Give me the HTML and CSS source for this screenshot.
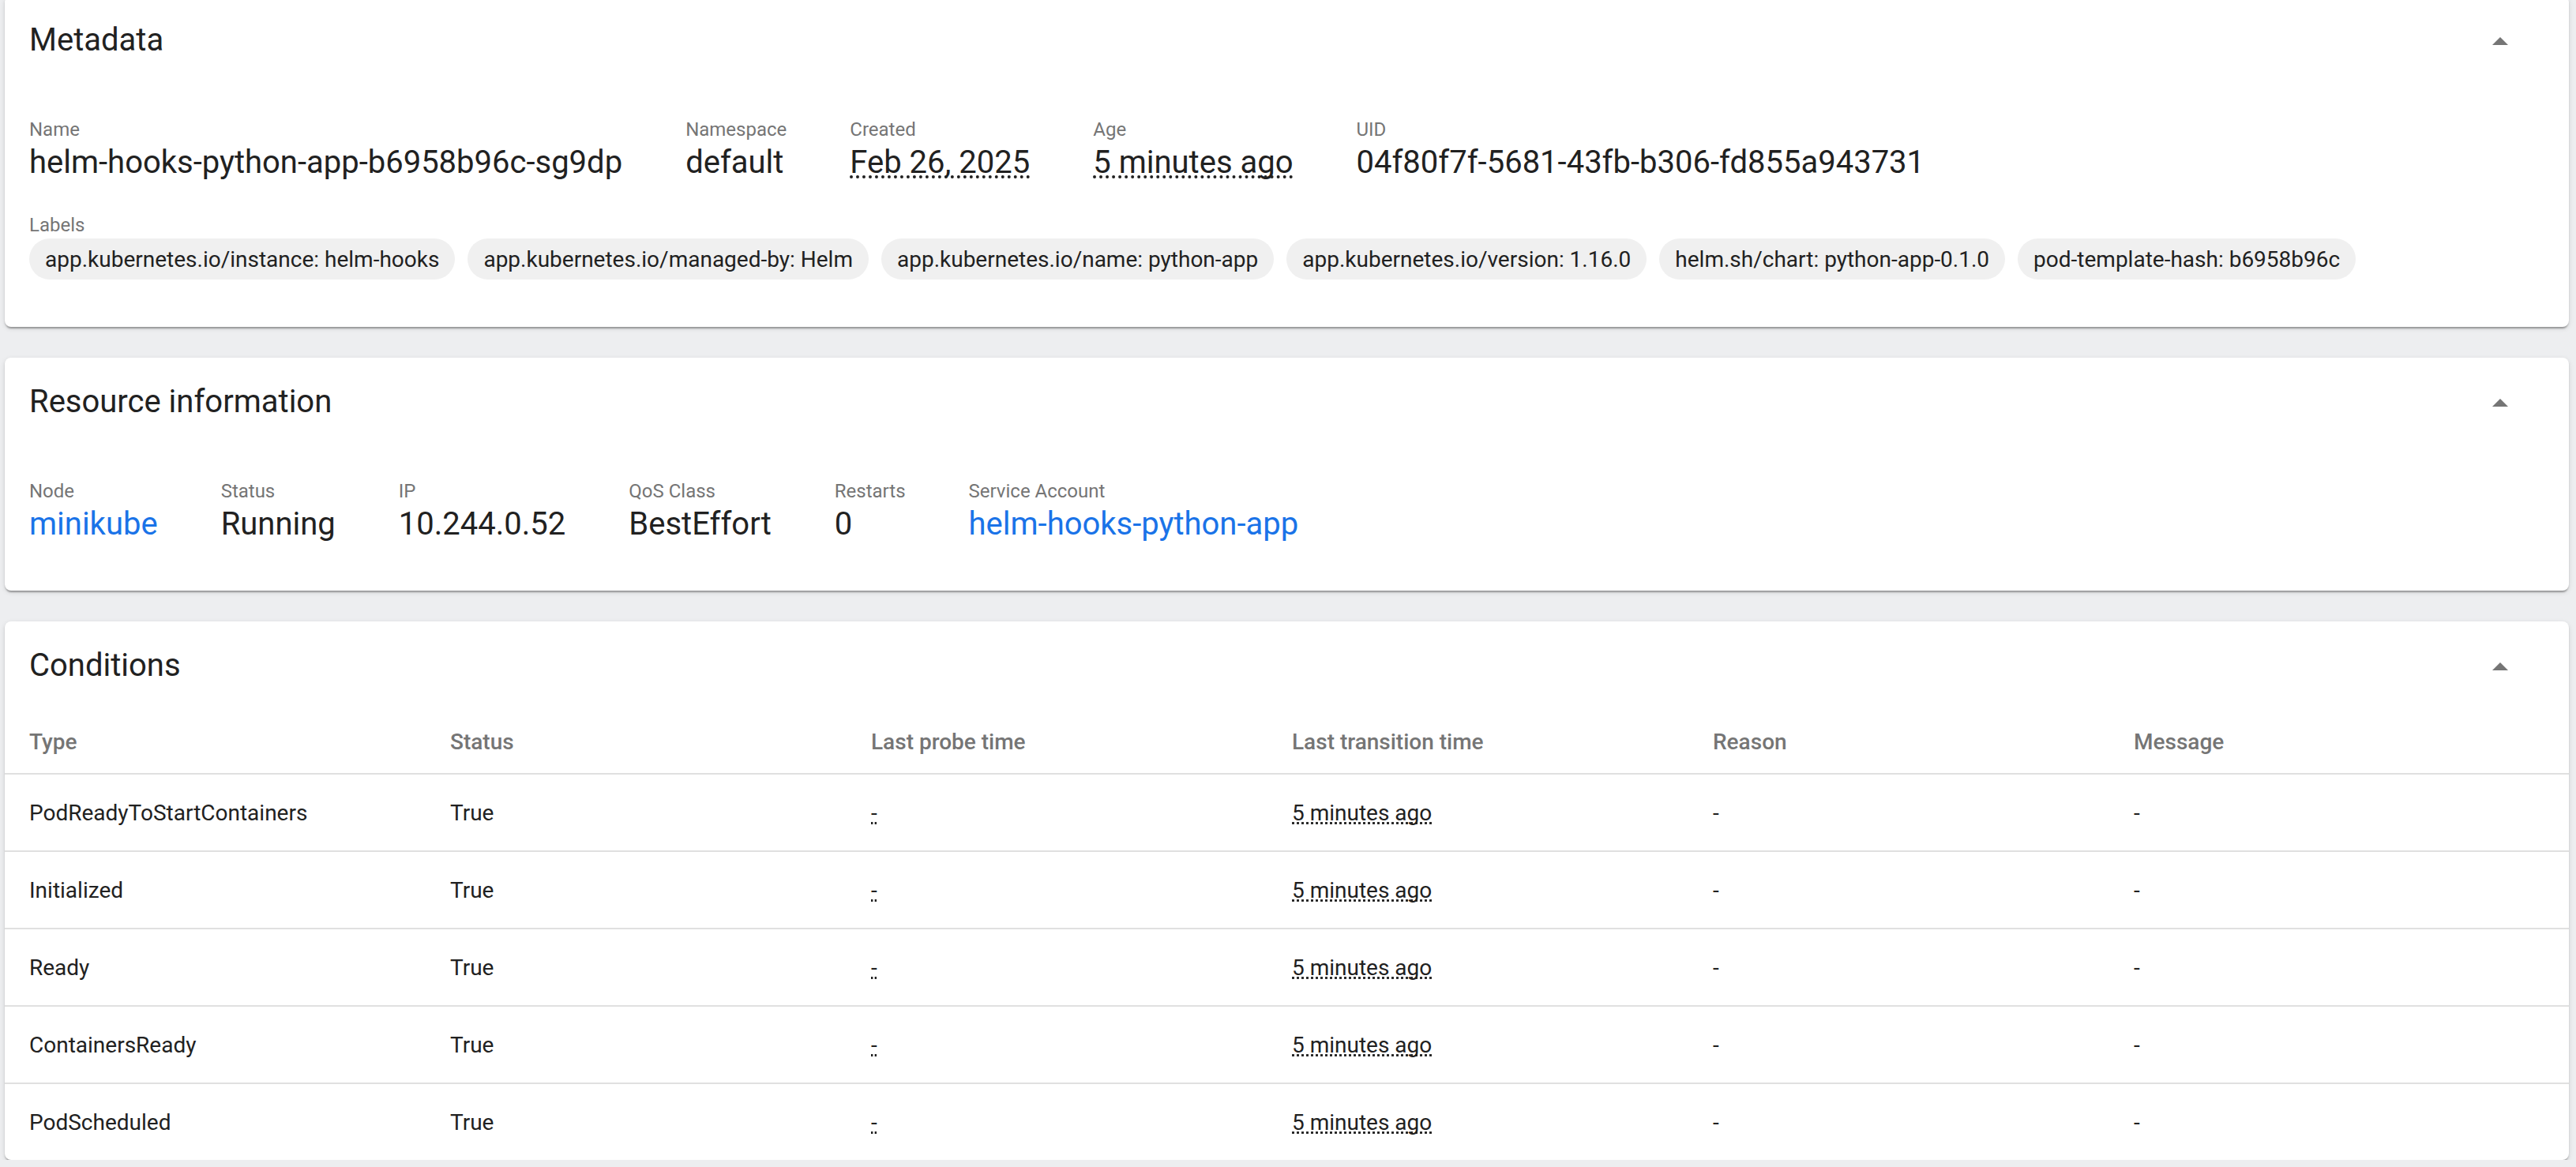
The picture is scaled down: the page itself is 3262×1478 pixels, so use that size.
FILE: index.html
```html
<!DOCTYPE html>
<html lang="en">
<head>
<meta charset="utf-8">
<title>Pod details</title>
<link rel="stylesheet" href="styles.css">
</head>
<body>
<main class="page">
  <section class="card">
    <header class="card-header">
      <h2 class="card-title">Metadata</h2>
      <svg class="toggle" viewBox="0 0 20 10" width="20" height="10"><path d="M0 10 L10 0 L20 10 Z"/></svg>
    </header>
    <div class="card-body meta-body">
      <div class="props">
        <div class="prop"><div class="prop-label">Name</div><div class="prop-value">helm-hooks-python-app-b6958b96c-sg9dp</div></div>
        <div class="prop"><div class="prop-label">Namespace</div><div class="prop-value">default</div></div>
        <div class="prop"><div class="prop-label">Created</div><div class="prop-value"><span class="dotted">Feb 26, 2025</span></div></div>
        <div class="prop"><div class="prop-label">Age</div><div class="prop-value"><span class="dotted">5 minutes ago</span></div></div>
        <div class="prop"><div class="prop-label">UID</div><div class="prop-value">04f80f7f-5681-43fb-b306-fd855a943731</div></div>
      </div>
      <div class="labels-block">
        <div class="prop-label">Labels</div>
        <div class="chips">
          <span class="chip">app.kubernetes.io/instance: helm-hooks</span>
          <span class="chip">app.kubernetes.io/managed-by: Helm</span>
          <span class="chip">app.kubernetes.io/name: python-app</span>
          <span class="chip">app.kubernetes.io/version: 1.16.0</span>
          <span class="chip">helm.sh/chart: python-app-0.1.0</span>
          <span class="chip">pod-template-hash: b6958b96c</span>
        </div>
      </div>
    </div>
  </section>

  <section class="card">
    <header class="card-header">
      <h2 class="card-title">Resource information</h2>
      <svg class="toggle" viewBox="0 0 20 10" width="20" height="10"><path d="M0 10 L10 0 L20 10 Z"/></svg>
    </header>
    <div class="card-body res-body">
      <div class="props">
        <div class="prop"><div class="prop-label">Node</div><div class="prop-value"><a class="link" href="#">minikube</a></div></div>
        <div class="prop"><div class="prop-label">Status</div><div class="prop-value">Running</div></div>
        <div class="prop"><div class="prop-label">IP</div><div class="prop-value">10.244.0.52</div></div>
        <div class="prop"><div class="prop-label">QoS Class</div><div class="prop-value">BestEffort</div></div>
        <div class="prop"><div class="prop-label">Restarts</div><div class="prop-value">0</div></div>
        <div class="prop"><div class="prop-label">Service Account</div><div class="prop-value"><a class="link" href="#">helm-hooks-python-app</a></div></div>
      </div>
    </div>
  </section>

  <section class="card">
    <header class="card-header">
      <h2 class="card-title">Conditions</h2>
      <svg class="toggle" viewBox="0 0 20 10" width="20" height="10"><path d="M0 10 L10 0 L20 10 Z"/></svg>
    </header>
    <div class="table">
      <div class="row head">
        <div>Type</div><div>Status</div><div>Last probe time</div><div>Last transition time</div><div>Reason</div><div>Message</div>
      </div>
      <div class="row">
        <div>PodReadyToStartContainers</div><div>True</div><div><span class="dotted">-</span></div><div><span class="dotted">5 minutes ago</span></div><div>-</div><div>-</div>
      </div>
      <div class="row">
        <div>Initialized</div><div>True</div><div><span class="dotted">-</span></div><div><span class="dotted">5 minutes ago</span></div><div>-</div><div>-</div>
      </div>
      <div class="row">
        <div>Ready</div><div>True</div><div><span class="dotted">-</span></div><div><span class="dotted">5 minutes ago</span></div><div>-</div><div>-</div>
      </div>
      <div class="row">
        <div>ContainersReady</div><div>True</div><div><span class="dotted">-</span></div><div><span class="dotted">5 minutes ago</span></div><div>-</div><div>-</div>
      </div>
      <div class="row">
        <div>PodScheduled</div><div>True</div><div><span class="dotted">-</span></div><div><span class="dotted">5 minutes ago</span></div><div>-</div><div>-</div>
      </div>
    </div>
  </section>
</main>
</body>
</html>
```

FILE: styles.css
```css
* { box-sizing: border-box; }

html, body {
  margin: 0;
  padding: 0;
  background: #edeef0;
  font-family: Roboto, "Liberation Sans", Arial, sans-serif;
  color: #212121;
}

.page {
  margin-top: -5px;
  padding: 0 9px 0 6px;
  display: flex;
  flex-direction: column;
  gap: 39px;
}

.card {
  background: #fff;
  border-radius: 8px;
  box-shadow: 0 4px 2px -2px rgba(0,0,0,.2), 0 2px 2px 0 rgba(0,0,0,.14), 0 2px 6px 0 rgba(0,0,0,.12);
}

.card-header {
  display: flex;
  align-items: center;
  justify-content: space-between;
  padding: 32px 77px 32px 31px;
}

.card-title {
  margin: 0;
  font-size: 40px;
  line-height: 48px;
  font-weight: 400;
}

.toggle {
  fill: #757575;
  display: block;
  margin-top: 2px;
}

.card-body {
  padding: 43px 31px 0 31px;
}

.res-body { padding-bottom: 60px; }
.meta-body { padding-bottom: 60px; }

.props {
  display: flex;
  flex-wrap: wrap;
  column-gap: 80px;
}

.prop-label {
  font-size: 24px;
  line-height: 28px;
  color: #757575;
}

.prop-value {
  margin-top: 4px;
  font-size: 40px;
  line-height: 48px;
  white-space: nowrap;
}

.link {
  color: #1a73e8;
  text-decoration: none;
}

.dotted {
  text-decoration: underline dotted;
  text-decoration-skip-ink: none;
  text-underline-offset: 3px;
}

.labels-block { margin-top: 41px; }

.chips {
  margin-top: 3px;
  display: flex;
  flex-wrap: wrap;
  gap: 16px;
}

.chip {
  height: 52px;
  display: inline-flex;
  align-items: center;
  padding: 0 20px;
  border-radius: 26px;
  background: #f0f0f0;
  font-size: 28px;
  white-space: nowrap;
}

.row {
  display: grid;
  grid-template-columns: repeat(6, 1fr);
  align-items: center;
  padding: 0 18px 0 31px;
  height: 98px;
  border-bottom: 2px solid #e0e0e0;
  font-size: 28px;
}

.row:last-child { border-bottom: none; height: 96px; }

.row.head {
  height: 82px;
  font-weight: 500;
  color: #757575;
}
```
